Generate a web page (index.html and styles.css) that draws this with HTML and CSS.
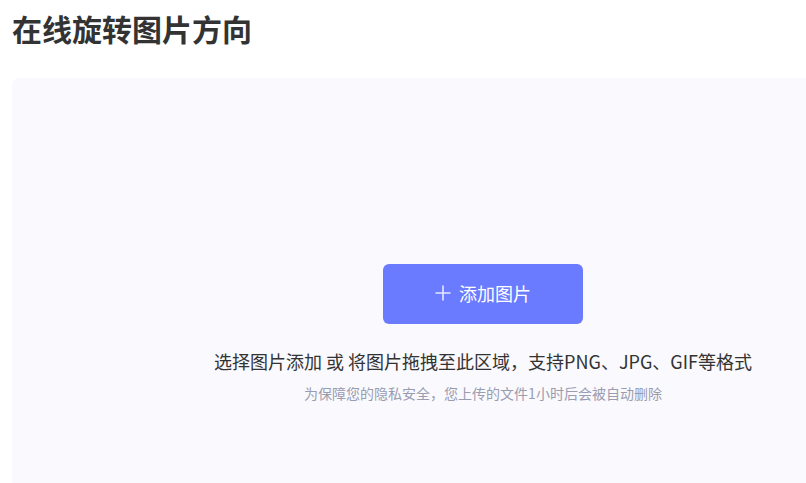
FILE: index.html
```html
<!DOCTYPE html>
<html lang="zh-CN">
<head>
<meta charset="utf-8">
<title>在线旋转图片方向</title>
<link rel="stylesheet" href="styles.css">
</head>
<body>
<div class="page">
  <h1 class="title">在线旋转图片方向</h1>
  <div class="panel">
    <div class="upload">
      <button class="btn" type="button">
        <svg class="plus" width="16" height="16" viewBox="0 0 16 16" aria-hidden="true"><path d="M8 0.5V15.5M0.5 8H15.5" stroke="#e6e8ff" stroke-width="1.6" fill="none"/></svg>
        <span>添加图片</span>
      </button>
      <p class="hint">选择图片添加 或 将图片拖拽至此区域，支持PNG、JPG、GIF等格式</p>
      <p class="note">为保障您的隐私安全，您上传的文件1小时后会被自动删除</p>
    </div>
  </div>
</div>
</body>
</html>
```

FILE: styles.css
```css
html, body {
  margin: 0;
  padding: 0;
  background: #ffffff;
  overflow: hidden;
}
body {
  font-family: "Microsoft YaHei", "Noto Sans CJK SC", "Noto Sans", sans-serif;
  color: #333333;
}
.page {
  width: 100vw;
  height: 100vh;
  overflow: hidden;
  padding-left: 12px;
  box-sizing: border-box;
}
.title {
  margin: 0;
  padding-top: 6px;
  font-size: 30px;
  line-height: 44px;
  font-weight: 700;
  color: #333333;
}
.panel {
  margin-top: 28px;
  width: 942px;
  height: 420px;
  background: #f9f9fe;
  border-radius: 8px;
  box-sizing: border-box;
  padding-top: 186px;
}
.upload {
  display: flex;
  flex-direction: column;
  align-items: center;
}
.btn {
  width: 200px;
  height: 60px;
  border: none;
  border-radius: 6px;
  background: #6b7bff;
  color: #ffffff;
  font-family: inherit;
  font-size: 18px;
  display: flex;
  align-items: center;
  justify-content: center;
  gap: 8px;
  padding: 0 0 2px 0;
  cursor: pointer;
}
.plus {
  display: block;
}
.hint {
  margin: 24px 0 0 0;
  font-size: 18px;
  line-height: 26px;
  color: #333333;
}
.note {
  margin: 9px 0 0 0;
  font-size: 14px;
  line-height: 20px;
  color: #9a9cb0;
}
```
